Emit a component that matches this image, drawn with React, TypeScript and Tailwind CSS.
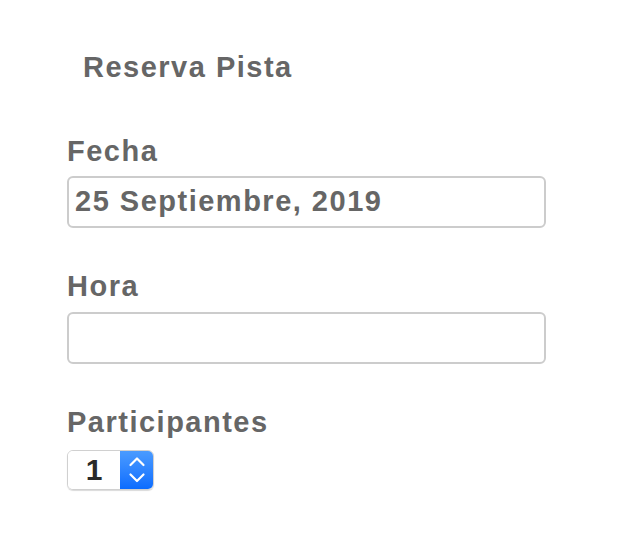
import React from "react";

function Label({ children }: { children: React.ReactNode }) {
  return (
    <div className="text-[29px] leading-[34px] font-bold tracking-[1.5px] text-[#666666]">{children}</div>
  );
}

export default function App() {
  return (
    <div
      className="w-[630px] h-[534px] bg-white pl-[67px] pt-[50px]"
      style={{ fontFamily: '"Liberation Sans", Arial, sans-serif' }}
    >
      <div className="pl-[16px] text-[29px] leading-[34px] font-bold tracking-[1.5px] text-[#666666]">Reserva Pista</div>
      <div className="mt-[50px] flex flex-col">
        <Label>Fecha</Label>
        <div className="mt-[8px] w-[479px] h-[52px] border-2 border-[#cccccc] rounded-[6px] flex items-center px-[6px]">
          <span className="text-[29px] font-bold tracking-[1.5px] text-[#666666]">25 Septiembre, 2019</span>
        </div>
        <div className="mt-[41px]">
          <Label>Hora</Label>
        </div>
        <div className="mt-[9px] w-[479px] h-[52px] border-2 border-[#cccccc] rounded-[6px]" />
        <div className="mt-[41px]">
          <Label>Participantes</Label>
        </div>
        <div className="mt-[11px] flex w-[87px] h-[40px] rounded-[6px] overflow-hidden border border-[#d0d0d0] shadow-[0_1px_1px_rgba(0,0,0,0.15)]">
          <div className="flex-1 flex items-center justify-center bg-white">
            <span className="text-[30px] font-bold text-[#2a2a2a] leading-none">1</span>
          </div>
          <div className="w-[33px] bg-gradient-to-b from-[#4a9bff] to-[#0a6cff] flex items-center justify-center">
            <svg width="18" height="30" viewBox="0 0 18 30" fill="none" stroke="white" strokeWidth="2.2" strokeLinecap="round" strokeLinejoin="round">
              <path d="M2.5 10 L9 3.5 L15.5 10" />
              <path d="M2.5 19.5 L9 26 L15.5 19.5" />
            </svg>
          </div>
        </div>
      </div>
    </div>
  );
}
